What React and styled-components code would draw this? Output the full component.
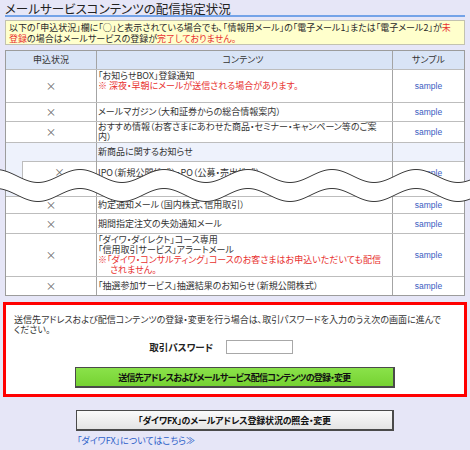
import React from 'react';
import styled, { createGlobalStyle } from 'styled-components';

const Global = createGlobalStyle`
  html, body { margin: 0; padding: 0; background: #e6e6f7; }
  body {
    width: 470px; height: 450px; overflow: hidden;
    font-family: "Noto Sans CJK JP", "Noto Sans", sans-serif;
    font-feature-settings: "palt";
    color: #2a2a2a;
  }
`;

const Page = styled.div`
  position: relative;
  padding: 2px 5px 0;
`;

const Title = styled.h1`
  margin: 0;
  font-size: 12.5px;
  line-height: 13px;
  font-weight: normal;
  color: #222;
  padding: 0;
  border-bottom: 2px solid #74a3e8;
`;

const Notice = styled.div`
  margin-top: 3px;
  height: 25px;
  box-sizing: border-box;
  background: #ffffcc;
  border: 1px solid #c2c2b0;
  padding: 1px 3px;
  font-size: 9px;
  line-height: 11px;
  white-space: nowrap;
`;

const Red = styled.span`
  color: #e8312f;
`;

const Table = styled.div`
  margin-top: 5px;
  border: 1px solid #9c9c9c;
  background: #fff;
`;

const Row = styled.div`
  display: grid;
  grid-template-columns: 91px minmax(0, 1fr) 72px;
  height: ${p => p.$h}px;
  box-sizing: border-box;
  border-top: ${p => (p.$first || p.$nested ? 'none' : '1px solid #bdbdbd')};
  background: ${p => (p.$head ? '#d9e4f6' : p.$group ? '#eef2fc' : '#fff')};
  font-size: 9px;
  line-height: 10px;
  align-items: stretch;
`;

const MarkCell = styled.div`
  display: flex;
  align-items: center;
  justify-content: center;
  border-right: 1px solid #a4a4a4;
  color: ${p => (p.$head ? '#333' : '#666')};
  font-size: ${p => (p.$head ? '9px' : '10.5px')};
`;

const IndentCell = styled.div`
  background: #eef2fc;
  padding-left: 16px;
  border-right: 1px solid #a4a4a4;
  display: flex;
`;

const IndentInner = styled.div`
  flex: 1;
  background: #fff;
  border-top: 1px solid #bdbdbd;
  border-left: 1px solid #bdbdbd;
  display: flex;
  justify-content: center;
  align-items: flex-start;
  padding-top: 5px;
  color: #666;
  font-size: 10.5px;
`;

const TextCell = styled.div`
  display: flex;
  flex-direction: column;
  justify-content: ${p => (p.$top ? 'flex-start' : 'center')};
  align-items: ${p => (p.$head ? 'center' : 'flex-start')};
  padding: ${p => (p.$top ? '6px 4px 0 1px' : `0 4px ${p.$pb || 0}px 1px`)};
  border-top: ${p => (p.$nested ? '1px solid #bdbdbd' : 'none')};
  color: #333;
`;

const SampleCell = styled.div`
  display: flex;
  align-items: ${p => (p.$top ? 'flex-start' : 'center')};
  justify-content: center;
  border-left: 1px solid #a4a4a4;
  border-top: ${p => (p.$nested ? '1px solid #bdbdbd' : 'none')};
  padding-top: ${p => (p.$top ? '6px' : '0')};
  font-size: ${p => (p.$head ? '9px' : '8.5px')};
  font-family: ${p => (p.$head ? 'inherit' : '"Liberation Sans", Arial, sans-serif')};
  color: ${p => (p.$head ? '#333' : '#3a5cbf')};
`;

const Line = styled.div`
  white-space: nowrap;
  color: ${p => (p.$red ? '#e8312f' : 'inherit')};
  padding-left: ${p => (p.$indent ? '12px' : '0')};
`;

const ApplyBox = styled.div`
  margin: 6px -2px 0;
  border: 3px solid #ff0000;
  background: #fff;
  padding: 10px 8px 6px;
`;

const Lead = styled.p`
  margin: 0;
  font-size: 9px;
  line-height: 10px;
  color: #333;
  white-space: nowrap;
`;

const PassRow = styled.div`
  display: grid;
  grid-template-columns: 199px 67px;
  column-gap: 13px;
  align-items: center;
  margin-top: 5px;
`;

const PassLabel = styled.label`
  text-align: right;
  font-size: 9.5px;
  font-weight: bold;
  color: #222;
`;

const PassInput = styled.input`
  height: 14px;
  box-sizing: border-box;
  border: 1px solid #a8a8a8;
  padding: 0;
  margin: 0;
  background: #fff;
`;

const ButtonWrap = styled.div`
  display: flex;
  justify-content: center;
  margin-top: ${p => p.$mt}px;
`;

const ActionButton = styled.button`
  width: ${p => p.$w}px;
  height: 21px;
  box-sizing: border-box;
  padding: 0;
  font-family: inherit;
  font-feature-settings: "palt";
  font-size: 9px;
  font-weight: bold;
  letter-spacing: ${p => p.$ls}px;
  color: #111;
  border: 1px solid #4a4a4a;
  border-bottom-width: 2px;
  border-right-width: 2px;
  background: ${p => (p.$green
    ? 'linear-gradient(#8ae24a, #76d232)'
    : 'linear-gradient(#fafafa, #e4e4e4)')};
  cursor: pointer;
`;

const FxLink = styled.a`
  display: block;
  margin: 4px 0 0 72px;
  font-size: 9px;
  line-height: 11px;
  color: #2d5fc9;
  text-decoration: none;
`;

const WaveSvg = styled.svg`
  position: absolute;
  left: 0;
  top: 160px;
  width: 470px;
  height: 50px;
  pointer-events: none;
`;

function wavePoints(c, a, period, t0, offsetY) {
  const pts = [];
  for (let x = -2; x <= 472; x += 2) {
    const y = c + a * Math.cos((2 * Math.PI * (x - t0)) / period) - offsetY;
    pts.push([x, y]);
  }
  return pts;
}

function Wave() {
  const top = wavePoints(176, 6.5, 84, 38, 160);
  const bottom = wavePoints(195, 6.5, 84, 38, 160);
  const toPath = pts => pts.map((p, i) => `${i ? 'L' : 'M'}${p[0].toFixed(1)} ${p[1].toFixed(2)}`).join(' ');
  const fill = toPath(top) + ' ' + bottom.slice().reverse().map(p => `L${p[0].toFixed(1)} ${p[1].toFixed(2)}`).join(' ') + ' Z';
  return (
    <WaveSvg viewBox="0 0 470 50">
      <path d={fill} fill="#fff" />
      <path d={toPath(top)} fill="none" stroke="#3a3a3a" strokeWidth="1" />
      <path d={toPath(bottom)} fill="none" stroke="#3a3a3a" strokeWidth="1" />
    </WaveSvg>
  );
}

const rows = [
  { h: 33, pb: 10, lines: [{ t: '「お知らせBOX」登録通知' }, { t: '※ 深夜・早朝にメールが送信される場合があります。', red: true }] },
  { h: 19, lines: [{ t: 'メールマガジン（大和証券からの総合情報案内）' }] },
  { h: 21, lines: [{ t: 'おすすめ情報（お客さまにあわせた商品・セミナー・キャンペーン等のご案' }, { t: '内）' }] },
];

const rowsAfter = [
  { h: 17, lines: [{ t: '約定通知メール（国内株式、信用取引）' }] },
  { h: 20, lines: [{ t: '期間指定注文の失効通知メール' }] },
  { h: 43, lines: [
    { t: '「ダイワ・ダイレクト」コース専用' },
    { t: '「信用取引サービス」アラートメール' },
    { t: '※「ダイワ・コンサルティング」コースのお客さまはお申込いただいても配信', red: true },
    { t: 'されません。', red: true, indent: true },
  ] },
  { h: 19, lines: [{ t: '「抽選参加サービス」抽選結果のお知らせ（新規公開株式）' }] },
];

function ServiceRow({ r }) {
  return (
    <Row $h={r.h}>
      <MarkCell>×</MarkCell>
      <TextCell $pb={r.pb}>
        {r.lines.map((l, i) => (
          <Line key={i} $red={l.red} $indent={l.indent}>{l.t}</Line>
        ))}
      </TextCell>
      <SampleCell>sample</SampleCell>
    </Row>
  );
}

export default function App() {
  return (
    <>
      <Global />
      <Page>
        <Title>メールサービスコンテンツの配信指定状況</Title>
        <Notice>
          以下の「申込状況」欄に「○」と表示されている場合でも、「情報用メール」の「電子メール1」または「電子メール2」が<Red>未</Red><br />
          <Red>登録</Red>の場合はメールサービスの登録が<Red>完了しておりません。</Red>
        </Notice>
        <Table>
          <Row $h={18} $head $first>
            <MarkCell $head>申込状況</MarkCell>
            <TextCell $head>コンテンツ</TextCell>
            <SampleCell $head>サンプル</SampleCell>
          </Row>
          {rows.map((r, i) => <ServiceRow key={i} r={r} />)}
          <Row $h={19} $group>
            <MarkCell />
            <TextCell>
              <Line>新商品に関するお知らせ</Line>
            </TextCell>
            <SampleCell />
          </Row>
          <Row $h={35} $nested>
            <IndentCell>
              <IndentInner>×</IndentInner>
            </IndentCell>
            <TextCell $top $nested>
              <Line>IPO（新規公開株式）・PO（公募・売出株式）</Line>
            </TextCell>
            <SampleCell $top $nested>sample</SampleCell>
          </Row>
          {rowsAfter.map((r, i) => <ServiceRow key={i} r={r} />)}
        </Table>
        <ApplyBox>
          <Lead>
            送信先アドレスおよび配信コンテンツの登録・変更を行う場合は、取引パスワードを入力のうえ次の画面に進んで<br />
            ください。
          </Lead>
          <PassRow>
            <PassLabel htmlFor="pw">取引パスワード</PassLabel>
            <PassInput id="pw" type="password" />
          </PassRow>
          <ButtonWrap $mt={13}>
            <ActionButton $green $w={320} $ls={-0.75}>送信先アドレスおよびメールサービス配信コンテンツの登録・変更</ActionButton>
          </ButtonWrap>
        </ApplyBox>
        <ButtonWrap $mt={13}>
          <ActionButton $w={318} $ls={-0.2}>「ダイワFX」のメールアドレス登録状況の照会・変更</ActionButton>
        </ButtonWrap>
        <FxLink href="#">「ダイワFX」についてはこちら≫</FxLink>
        <Wave />
      </Page>
    </>
  );
}
